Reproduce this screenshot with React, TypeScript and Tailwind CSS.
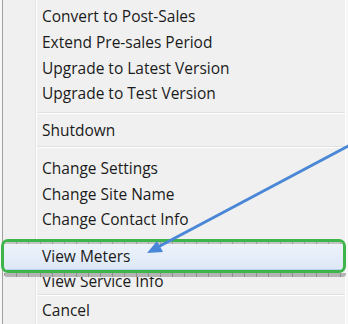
const groups: string[][] = [
  ['Convert to Post-Sales', 'Extend Pre-sales Period', 'Upgrade to Latest Version', 'Upgrade to Test Version'],
  ['Shutdown'],
  ['Change Settings', 'Change Site Name', 'Change Contact Info'],
]

function Row({ label, className = 'h-[26px]' }: { label: string; className?: string }) {
  return (
    <div className={`flex items-center pl-[5px] ${className}`}>
      <span>{label}</span>
    </div>
  )
}

function Separator({ className = '' }: { className?: string }) {
  return (
    <div className={`flex flex-col ${className}`}>
      <div className="h-px bg-[#e0e0e0]" />
      <div className="h-px bg-white" />
    </div>
  )
}

export default function App() {
  return (
    <div className="relative w-[348px] h-[324px] overflow-hidden bg-[#f7f7f7] text-[15.5px] text-[#1b1b1b] [font-family:'Open_Sans',sans-serif]">
      <div className="ml-[2px] w-[344px] h-full flex bg-[#f0f0f0] border-l border-[#a0a0a0] border-r border-r-white">
        {/* icon gutter */}
        <div className="w-[32px] shrink-0" />
        <div className="w-px bg-[#e2e3e3]" />
        <div className="w-px bg-white" />

        <div className="flex-1 flex flex-col pt-[4px]">
          {groups[0].map(l => <Row key={l} label={l} />)}
          <Separator className="mt-[5px] mb-[4px]" />
          {groups[1].map(l => <Row key={l} label={l} />)}
          <Separator className="mt-[2px] mb-[8px]" />
          {groups[2].map(l => <Row key={l} label={l} />)}
          {/* room for the View Meters callout below */}
          <div className="h-[37px]" />
          <Row label="View Service Info" className="h-[25px]" />
          <Separator className="mt-0 mb-[2px]" />
          <Row label="Cancel" />
        </div>
      </div>

      {/* highlight callout */}
      <div className="absolute left-[1px] top-[239px] w-[345px] h-[34px] rounded-[7px] border-[3px] border-[#3db54a] bg-[linear-gradient(#eef3fb,#dde8f6)] overflow-hidden">
        <div className="h-[2px] bg-[repeating-linear-gradient(90deg,#9e9e9e_0_1px,#c4c4c4_1px_12px)]" />
        <div className="absolute left-0 right-0 bottom-0 h-px bg-[#b9cfee]" />
        <div className="flex items-center h-[26px] pl-[38px] text-[#1b1b1b]">View Meters</div>
      </div>
      <div className="absolute left-[4px] top-[273px] w-[342px] h-[4px] rounded-b-[3px] bg-[repeating-linear-gradient(90deg,#8f8f8f_0_1px,#b4b4b4_1px_12px)]" />

      {/* pointer arrow */}
      <svg className="absolute inset-0" width="348" height="324" viewBox="0 0 348 324">
        <line x1="352" y1="144" x2="158" y2="247" stroke="#4a87d6" strokeWidth="3" />
        <polygon points="147,253 163,252 157,241" fill="#4a87d6" />
      </svg>
    </div>
  )
}
